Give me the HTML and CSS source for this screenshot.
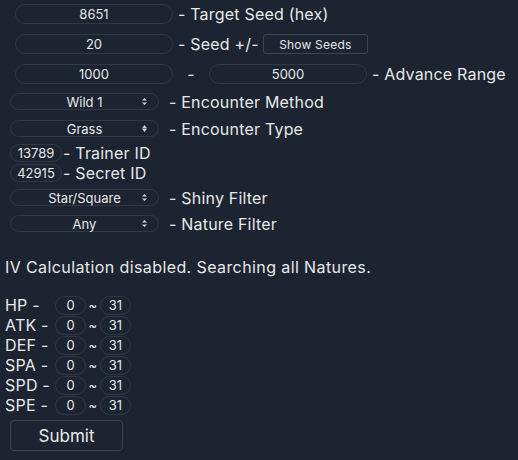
FILE: index.html
```html
<!DOCTYPE html>
<html>
<head>
<meta charset="utf-8">
<link rel="stylesheet" href="styles.css">
</head>
<body>
<div class="page">
  <div class="row r1">
    <input class="field wide" value="8651">
    <span class="label">- Target Seed (hex)</span>
  </div>
  <div class="row r2">
    <input class="field wide" value="20">
    <span class="label">- Seed +/-</span>
    <button class="btn-small">Show Seeds</button>
  </div>
  <div class="row r3">
    <input class="field wide" value="1000">
    <span class="dash">-</span>
    <input class="field wide" value="5000">
    <span class="label">- Advance Range</span>
  </div>
  <div class="row sel-row r4">
    <div class="select"><span>Wild 1</span><svg class="arrow" width="5" height="7" viewBox="0 0 5 7"><path d="M2.5 0 L5 2.6 H0 Z M2.5 7 L5 4.4 H0 Z" fill="#cfd3d8"/></svg></div>
    <span class="label">- Encounter Method</span>
  </div>
  <div class="row sel-row r5">
    <div class="select"><span>Grass</span><svg class="arrow" width="5" height="7" viewBox="0 0 5 7"><path d="M2.5 0 L5 3.2 H0 Z M2.5 7 L5 3.8 H0 Z" fill="#cfd3d8"/></svg></div>
    <span class="label">- Encounter Type</span>
  </div>
  <div class="row id-row r6">
    <input class="field short" value="13789">
    <span class="label-tight">- Trainer ID</span>
  </div>
  <div class="row id-row r7">
    <input class="field short" value="42915">
    <span class="label-tight">- Secret ID</span>
  </div>
  <div class="row sel-row r8">
    <div class="select"><span>Star/Square</span><svg class="arrow" width="5" height="7" viewBox="0 0 5 7"><path d="M2.5 0 L5 2.6 H0 Z M2.5 7 L5 4.4 H0 Z" fill="#cfd3d8"/></svg></div>
    <span class="label">- Shiny Filter</span>
  </div>
  <div class="row sel-row r9">
    <div class="select"><span>Any</span><svg class="arrow" width="5" height="7" viewBox="0 0 5 7"><path d="M2.5 0 L5 2.6 H0 Z M2.5 7 L5 4.4 H0 Z" fill="#cfd3d8"/></svg></div>
    <span class="label">- Nature Filter</span>
  </div>
  <p class="note">IV Calculation disabled. Searching all Natures.</p>
  <div class="ivs">
    <div class="iv-row"><span class="iv-label">HP -</span><input class="field iv" value="0"><span class="tilde">~</span><input class="field iv" value="31"></div>
    <div class="iv-row"><span class="iv-label">ATK -</span><input class="field iv" value="0"><span class="tilde">~</span><input class="field iv" value="31"></div>
    <div class="iv-row"><span class="iv-label">DEF -</span><input class="field iv" value="0"><span class="tilde">~</span><input class="field iv" value="31"></div>
    <div class="iv-row"><span class="iv-label">SPA -</span><input class="field iv" value="0"><span class="tilde">~</span><input class="field iv" value="31"></div>
    <div class="iv-row"><span class="iv-label">SPD -</span><input class="field iv" value="0"><span class="tilde">~</span><input class="field iv" value="31"></div>
    <div class="iv-row"><span class="iv-label">SPE -</span><input class="field iv" value="0"><span class="tilde">~</span><input class="field iv" value="31"></div>
  </div>
  <button class="submit">Submit</button>
</div>
</body>
</html>
```
FILE: styles.css
```css
html, body {
  margin: 0;
  padding: 0;
  background: #1b2430;
  height: 100%;
}
body {
  color: #e8e8e8;
  font-family: Inter, "Noto Sans", sans-serif;
  font-size: 16px;
  letter-spacing: 0.2px;
}
.page {
  padding: 4px 5px 0 5px;
}
.row {
  display: flex;
  align-items: center;
}
.r1, .r2, .r3 {
  height: 20px;
  margin-bottom: 10px;
  padding-left: 10px;
}
.field {
  box-sizing: border-box;
  background: transparent;
  border: 1px solid #2f3a46;
  border-radius: 10px;
  color: #e8e8e8;
  font-family: inherit;
  font-size: 13px;
  letter-spacing: 0;
  text-align: center;
  padding: 0;
  margin: 0;
  outline: none;
}
.wide {
  width: 158px;
  height: 20px;
}
.label {
  margin-left: 5px;
  white-space: nowrap;
}
.dash {
  width: 36px;
  text-align: center;
}
.btn-small {
  margin-left: 4px;
  height: 20px;
  width: 105px;
  background: transparent;
  border: 1px solid #3a4653;
  border-radius: 3px;
  color: #e8e8e8;
  font-family: inherit;
  font-size: 12px;
  letter-spacing: 0.2px;
  padding: 0;
}
.sel-row {
  padding-left: 5px;
  height: 17px;
}
.r4 { margin-top: -1px; }
.r5 { margin-top: 10px; }
.r8 { margin-top: 7px; }
.r9 { margin-top: 9px; }
.select {
  box-sizing: border-box;
  width: 149px;
  height: 17px;
  border: 1px solid #2f3a46;
  border-radius: 9px;
  display: flex;
  align-items: center;
  justify-content: center;
  position: relative;
  font-size: 13px;
  letter-spacing: 0;
}
.select .arrow {
  position: absolute;
  right: 11px;
  top: 4px;
}
.sel-row .label {
  margin-left: 10px;
}
.id-row {
  padding-left: 5px;
  height: 19px;
}
.r6 { margin-top: 6px; }
.r7 { margin-top: 1px; }
.short {
  width: 52px;
  height: 18px;
}
.label-tight {
  margin-left: 1px;
}
.note {
  margin: 25px 0 0 0;
  line-height: 20px;
  letter-spacing: 0.4px;
}
.ivs {
  margin-top: 18px;
}
.iv-row {
  display: flex;
  align-items: center;
  height: 20px;
  line-height: 20px;
}
.iv-label {
  width: 50px;
  white-space: nowrap;
}
.iv {
  width: 31px;
  height: 19px;
}
.tilde {
  width: 14px;
  text-align: center;
  font-size: 13px;
}
.submit {
  margin: 5px 0 0 5px;
  width: 113px;
  height: 31px;
  background: transparent;
  border: 1px solid #3a4653;
  border-radius: 4px;
  color: #e8e8e8;
  font-family: inherit;
  font-size: 17px;
}
```
